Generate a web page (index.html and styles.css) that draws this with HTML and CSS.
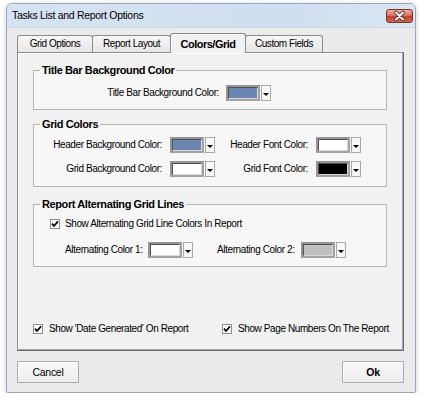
FILE: index.html
```html
<!DOCTYPE html>
<html>
<head>
<meta charset="utf-8">
<title>Tasks List and Report Options</title>
<link rel="stylesheet" href="styles.css">
</head>
<body>
<div class="window">
  <div class="titlebar">
    <span class="title">Tasks List and Report Options</span>
    <button class="close" aria-label="Close">
      <svg width="27" height="14" viewBox="0 0 27 14">
        <path d="M10 3.5 L17 10.5 M17 3.5 L10 10.5" stroke="#5a2219" stroke-width="3.6" stroke-linecap="round" fill="none"/>
        <path d="M10 3.5 L17 10.5 M17 3.5 L10 10.5" stroke="#ffffff" stroke-width="2" stroke-linecap="round" fill="none"/>
      </svg>
    </button>
  </div>
  <div class="client">
    <div class="tabs">
      <div class="tab t1">Grid Options</div>
      <div class="tab t2">Report Layout</div>
      <div class="tab t3 active">Colors/Grid</div>
      <div class="tab t4">Custom Fields</div>
    </div>
    <div class="panel">
      <fieldset class="group g1">
        <legend>Title Bar Background Color</legend>
        <div class="grid1">
          <span class="label">Title Bar Background Color:</span>
          <span class="combo"><span class="frame"><span class="swatch blue"></span></span><span class="drop"></span></span>
        </div>
      </fieldset>
      <fieldset class="group g2">
        <legend>Grid Colors</legend>
        <div class="grid2">
          <span class="label">Header Background Color:</span>
          <span class="combo"><span class="frame"><span class="swatch blue"></span></span><span class="drop"></span></span>
          <span class="label">Header Font Color:</span>
          <span class="combo"><span class="frame"><span class="swatch white"></span></span><span class="drop"></span></span>
          <span class="label">Grid Background Color:</span>
          <span class="combo"><span class="frame"><span class="swatch white"></span></span><span class="drop"></span></span>
          <span class="label">Grid Font Color:</span>
          <span class="combo"><span class="frame"><span class="swatch black"></span></span><span class="drop"></span></span>
        </div>
      </fieldset>
      <fieldset class="group g3">
        <legend>Report Alternating Grid Lines</legend>
        <div class="check-row">
          <span class="checkbox"><svg width="10" height="10" viewBox="0 0 10 10"><path d="M2 4.6 L4 7 L8 2.4" stroke="#000" stroke-width="1.7" fill="none"/></svg></span>
          <span class="label">Show Alternating Grid Line Colors In Report</span>
        </div>
        <div class="alt-row">
          <span class="label alt1">Alternating Color 1:</span>
          <span class="combo c-alt1"><span class="frame"><span class="swatch white"></span></span><span class="drop"></span></span>
          <span class="label alt2">Alternating Color 2:</span>
          <span class="combo c-alt2"><span class="frame"><span class="swatch gray"></span></span><span class="drop"></span></span>
        </div>
      </fieldset>
      <div class="bottom-row">
        <div class="check-item">
          <span class="checkbox"><svg width="10" height="10" viewBox="0 0 10 10"><path d="M2 4.6 L4 7 L8 2.4" stroke="#000" stroke-width="1.7" fill="none"/></svg></span>
          <span class="label">Show 'Date Generated' On Report</span>
        </div>
        <div class="check-item">
          <span class="checkbox"><svg width="10" height="10" viewBox="0 0 10 10"><path d="M2 4.6 L4 7 L8 2.4" stroke="#000" stroke-width="1.7" fill="none"/></svg></span>
          <span class="label">Show Page Numbers On The Report</span>
        </div>
      </div>
    </div>
    <div class="buttons">
      <button class="btn">Cancel</button>
      <button class="btn ok">Ok</button>
    </div>
  </div>
</div>
</body>
</html>
```
FILE: styles.css
```css
* { box-sizing: border-box; }

html, body {
  margin: 0;
  padding: 0;
  background: #ffffff;
}

body {
  font-family: "Liberation Sans", Arial, sans-serif;
  font-size: 10px;
  color: #000;
  overflow: hidden;
}

.window {
  margin: 3px 0 0 6px;
  width: 410px;
  height: 390px;
  border: 1px solid #9aa8ba;
  border-radius: 6px 6px 2px 2px;
  background: #ebebeb;
  box-shadow: 0 1px 5px rgba(0, 0, 0, 0.22);
  display: flex;
  flex-direction: column;
  overflow: hidden;
}

.titlebar {
  height: 24px;
  flex: none;
  display: flex;
  justify-content: space-between;
  align-items: flex-start;
  padding: 0 2px 0 5px;
  background: linear-gradient(to right, #d6e3f2 0%, #cfdef0 70%, #dbe6f3 100%);
  border-bottom: 1px solid #c9d6e6;
}

.title {
  font-size: 10.5px;
  letter-spacing: -0.3px;
  line-height: 23px;
  color: #000;
}

.close {
  margin-top: 5px;
  width: 27px;
  height: 14px;
  padding: 0;
  border: 1px solid #7a3326;
  border-radius: 3px;
  background: linear-gradient(#eab0a4 0%, #d9725f 45%, #c2402b 55%, #cf6a52 100%);
  display: flex;
  align-items: center;
  justify-content: center;
}

.close svg { display: block; margin: -1px; }

.client {
  flex: 1;
  display: flex;
  flex-direction: column;
  padding: 5px 11px 9px 10px;
}

.tabs {
  height: 19px;
  flex: none;
  display: flex;
  align-items: flex-end;
  position: relative;
  z-index: 1;
}

.tab {
  height: 17px;
  border: 1px solid #8c8c8c;
  border-bottom: none;
  border-radius: 3px 3px 0 0;
  background: linear-gradient(#f7f7f7, #e6e6e6);
  text-align: center;
  line-height: 16px;
  font-size: 10px;
  letter-spacing: -0.45px;
  margin-left: -1px;
}

.t1 { width: 76px; margin-left: 0; }
.t2 { width: 79px; }
.t3 { width: 76px; }
.t4 { width: 78px; }

.tab.active {
  height: 20px;
  margin-bottom: -1px;
  background: #f1f1f1;
  font-weight: bold;
  font-size: 11px;
  letter-spacing: -0.5px;
  line-height: 21px;
  border-color: #8a8a8a;
  box-shadow: inset 1px 1px 0 #ffffff;
  position: relative;
  z-index: 2;
}

.panel {
  height: 299px;
  flex: none;
  display: flex;
  flex-direction: column;
  background: #f1f1f1;
  border: 1px solid #8d8d8d;
  border-right-color: #6a6a6a;
  border-bottom-color: #6a6a6a;
  box-shadow: inset -1px -1px 0 #a6a6a6, inset 1px 1px 0 #ffffff;
  padding: 10px 16px 13px 15px;
}

.group {
  margin: 0;
  min-width: 0;
  border: 1px solid #b4b4b4;
  background: #f7f7f7;
  padding: 0;
}

.group legend {
  margin-left: 6px;
  padding: 0 2px;
  font-weight: bold;
  font-size: 11px;
  letter-spacing: -0.4px;
  line-height: 14px;
  height: 14px;
}

.g1 { padding: 8px 0 8px 0; }
.g2 { margin-top: 7px; padding: 6px 0 9px 0; }
.g3 { margin-top: 10px; padding: 5px 0 8px 0; }

.label {
  white-space: nowrap;
  line-height: 16px;
  letter-spacing: -0.4px;
}

.grid1 {
  display: grid;
  grid-template-columns: 185px 45px;
  column-gap: 7px;
  align-items: center;
}

.grid1 .label,
.grid2 .label { text-align: right; }

.grid2 {
  display: grid;
  grid-template-columns: 128px 45px 85px 45px;
  column-gap: 8px;
  row-gap: 8px;
  align-items: center;
}

.combo {
  display: flex;
  width: 45px;
  height: 16px;
  gap: 1px;
  flex: none;
}

.frame {
  flex: 1;
  display: flex;
  border: 2px solid #a2a2a2;
  border-top-color: #959595;
  border-left-color: #959595;
}

.swatch {
  flex: 1;
  border: 1px solid #4f4f4f;
  border-right-color: #d8d8d8;
  border-bottom-color: #d8d8d8;
}

.swatch.blue { background: #6b86b2; }
.swatch.white { background: #ffffff; }
.swatch.black { background: #000000; }
.swatch.gray { background: #c0c0c0; }

.drop {
  width: 10px;
  border: 1px solid #a8a8a8;
  background: #f8f8f8;
  display: flex;
  align-items: center;
  justify-content: center;
  padding-top: 2px;
}

.drop::before {
  content: "";
  width: 0;
  height: 0;
  border-left: 3px solid transparent;
  border-right: 3px solid transparent;
  border-top: 3px solid #000;
}

.check-row {
  display: flex;
  align-items: center;
  gap: 5px;
  height: 16px;
  padding-left: 16px;
}

.checkbox {
  width: 10px;
  height: 10px;
  flex: none;
  display: flex;
  border: 1px solid #8e8e8e;
  background: #ffffff;
}

.checkbox svg {
  display: block;
  margin: -1px;
}

.alt-row {
  display: flex;
  align-items: center;
  margin-top: 10px;
  padding-left: 31px;
}

.alt1 { width: 78px; }
.c-alt1 { margin-left: 5px; }
.alt2 { width: 76px; margin-left: 24px; }
.c-alt2 { margin-left: 8px; }

.bottom-row {
  margin-top: auto;
  display: grid;
  grid-template-columns: 189px auto;
  height: 16px;
  align-items: center;
}

.check-item {
  display: flex;
  align-items: center;
  gap: 6px;
}

.buttons {
  margin-top: 10px;
  display: flex;
  justify-content: space-between;
}

.btn {
  width: 62px;
  height: 22px;
  padding: 0;
  border: 1px solid #a9a9a9;
  border-radius: 1px;
  background: linear-gradient(#f9f9f9, #ececec);
  box-shadow: inset 1px 1px 0 #ffffff;
  font-family: "Liberation Sans", Arial, sans-serif;
  font-size: 10.5px;
  letter-spacing: -0.3px;
  color: #000;
}

.btn.ok { font-weight: bold; }
```
